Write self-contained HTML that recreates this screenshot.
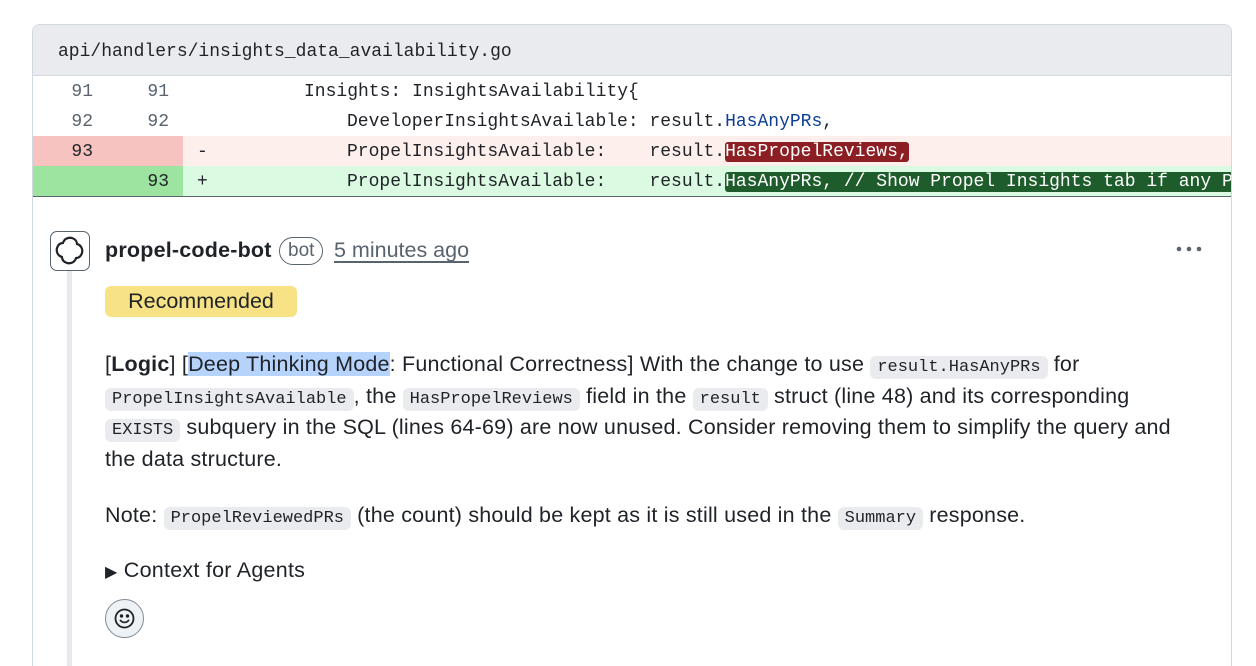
<!DOCTYPE html>
<html><head><meta charset="utf-8"><style>
*{box-sizing:border-box;margin:0;padding:0}
html,body{width:1256px;height:666px;overflow:hidden}
body{background:#fff;font-family:"Liberation Sans",sans-serif;color:#1f2328;position:relative}
.card{position:absolute;left:32px;top:24px;width:1200px;height:642px;border:1px solid #d1d9e0;border-bottom:none;border-radius:8px 8px 0 0;overflow:hidden}
.hdr{height:51px;background:#e9ebef;border-bottom:1px solid #d1d9e0;font:18px "Liberation Mono",monospace;padding:17px 0 0 25px;color:#1f2328}
.row{position:relative;height:30px;font:18px/32px "Liberation Mono",monospace;white-space:pre}
.n1,.n2{position:absolute;top:0;height:30px;text-align:right;color:#59636e}
.n1{left:0;width:60px}
.n2{left:75px;width:61px}
.num{position:absolute;left:0;top:0;width:150px;height:30px}
.bg{position:absolute;left:150px;top:0;right:0;height:30px}
.sg{position:absolute;left:164px;top:0}
.code{position:absolute;top:0}
.del .num{background:#f6c3c0}.del .bg{background:#fcefec}
.add .num{background:#9de4a0}.add .bg{background:#dafbe1}
.del .n1,.add .n2{color:#1f2328}
.hl1{background:#8c1f23;color:#fff;border-radius:3px}
.hl2{background:#1f5c2b;color:#fff;border-radius:3px 0 0 3px}
.sep{position:absolute;left:0;right:0;top:171px;border-top:1px solid #59636e}
.tl{position:absolute;left:67px;top:268px;width:5px;height:400px;background:#e6e9ee}
.av{position:absolute;left:50px;top:231px;width:40px;height:40px;border:1.5px solid #59636e;border-radius:7px;background:#fff}
.name{position:absolute;left:105px;top:238px;font-size:21.5px;font-weight:bold;letter-spacing:0.2px}
.bot{position:absolute;left:279px;top:237px;height:28px;padding:0 8px;border:1px solid #59636e;border-radius:14px;font-size:19px;line-height:26px;color:#59636e}
.time{position:absolute;left:334px;top:238px;font-size:21.5px;color:#59636e;text-decoration:underline;text-underline-offset:4px}
.rec{position:absolute;left:105px;top:286px;height:31px;width:192px;text-align:center;background:#f8e286;border-radius:6px;font-size:21.5px;line-height:31px;color:#1f2328}
.p{position:absolute;left:105px;width:1120px;font-size:21.5px;line-height:31.7px;letter-spacing:0.2px;white-space:nowrap}
code{font:17px "Liberation Mono",monospace;background:#e9ebef;border-radius:6px;padding:2px 7px;letter-spacing:0}
.sel{background:#b5d3fb}
.ctx{position:absolute;left:105px;top:558px;font-size:21.5px;letter-spacing:0.25px}
.smile{position:absolute;left:105px;top:599px;width:39px;height:39px;border:1px solid #818b98;border-radius:50%;background:#eff2f5}
</style></head><body>
<div class="card">
<div class="hdr">api/handlers/insights_data_availability.go</div>
<div class="row"><div class="num"></div><span class="n1">91</span><span class="n2">91</span><div class="bg"></div><span class="code" style="left:271px">Insights: InsightsAvailability{</span></div>
<div class="row"><div class="num"></div><span class="n1">92</span><span class="n2">92</span><div class="bg"></div><span class="code" style="left:314px">DeveloperInsightsAvailable: result.<span style="color:#0e3f94">HasAnyPRs</span>,</span></div>
<div class="row del"><div class="num"></div><span class="n1">93</span><span class="n2"></span><div class="bg"></div><span class="sg">-</span><span class="code" style="left:314px">PropelInsightsAvailable:    result.<span class="hl1">HasPropelReviews,</span></span></div>
<div class="row add"><div class="num"></div><span class="n1"></span><span class="n2">93</span><div class="bg"></div><span class="sg">+</span><span class="code" style="left:314px">PropelInsightsAvailable:    result.<span class="hl2">HasAnyPRs, // Show Propel Insights tab if any PRs exist</span></span></div>
<div class="sep"></div>
</div>
<div class="tl"></div>
<div class="av"><svg width="37" height="37" viewBox="0 0 37 37" fill="none" stroke="#1f2328" stroke-width="2.2" stroke-linecap="round"><path d="M12 11c1-4 5-6 9-5c3 1 5 3 5 6M26 12c4 1 6 5 5 9c-1 3-3 5-6 5M25 26c-1 4-5 6-9 5c-3-1-5-3-5-6M11 25c-4-1-6-5-5-9c1-3 3-5 6-5"/></svg></div>
<div class="name">propel-code-bot</div>
<div class="bot">bot</div>
<div class="time">5 minutes ago</div>
<svg style="position:absolute;left:1175px;top:245px" width="28" height="8"><circle cx="4" cy="4" r="2.3" fill="#59636e"/><circle cx="14" cy="4" r="2.3" fill="#59636e"/><circle cx="24" cy="4" r="2.3" fill="#59636e"/></svg>
<div class="rec">Recommended</div>
<div class="p" style="top:349px">[<b>Logic</b>] [<span class="sel">Deep Thinking Mode</span>: Functional Correctness] With the change to use <code>result.HasAnyPRs</code> for<br><code>PropelInsightsAvailable</code>, the <code>HasPropelReviews</code> field in the <code>result</code> struct (line 48) and its corresponding<br><code>EXISTS</code> subquery in the SQL (lines 64-69) are now unused. Consider removing them to simplify the query and<br>the data structure.</div>
<div class="p" style="top:500px">Note: <code>PropelReviewedPRs</code> (the count) should be kept as it is still used in the <code>Summary</code> response.</div>
<div class="ctx"><span style="font-size:16px">▶</span> Context for Agents</div>
<div class="smile"><svg width="37" height="37" viewBox="0 0 37 37" fill="none" stroke="#1f2328" stroke-width="1.8"><circle cx="18.5" cy="18.5" r="9"/><path d="M14.5 20.5c2 2.5 6 2.5 8 0" stroke-linecap="round"/><circle cx="15.5" cy="16" r=".8" fill="#1f2328"/><circle cx="21.5" cy="16" r=".8" fill="#1f2328"/></svg></div>
</body></html>
